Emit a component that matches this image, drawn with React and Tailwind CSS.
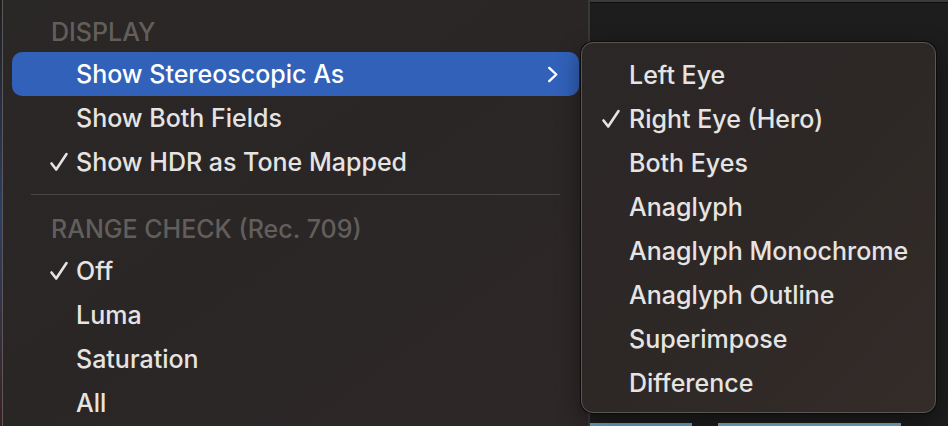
import { Fragment } from "react"

const FONT = "font-['Inter','Liberation_Sans',sans-serif]"

function Check({ className = "" }) {
  return (
    <svg viewBox="0 0 20 20" className={"w-[20px] h-[20px] " + className} fill="none">
      <path d="M2.5 11.5 L7.2 17.5 L17.5 2" stroke="currentColor" strokeWidth="2.6" strokeLinecap="round" strokeLinejoin="round" />
    </svg>
  )
}

function Chevron() {
  return (
    <svg viewBox="0 0 12 18" className="w-[12px] h-[17px]" fill="none">
      <path d="M2 2 L9.5 9 L2 16" stroke="currentColor" strokeWidth="2.5" strokeLinecap="round" strokeLinejoin="round" />
    </svg>
  )
}

function Header({ children }) {
  return (
    <div className="h-[44px] flex items-center pt-[5px] pl-[48px] text-[25px] font-medium text-[#625e5c]">
      {children}
    </div>
  )
}

function Item({ label, checked, active, submenu }) {
  return (
    <div
      className={
        "mx-[9px] h-[44px] flex items-center pl-[37px] pr-[20px] rounded-[10px] text-[25px] font-medium " +
        (active ? "bg-[#3161b9] text-white" : "text-[#e6e4e3]")
      }
    >
      <span className="w-[27px] flex items-center">{checked && <Check />}</span>
      <span className="flex-1 leading-none">{label}</span>
      {submenu && <Chevron />}
    </div>
  )
}

const stereo = [
  { label: "Left Eye" },
  { label: "Right Eye (Hero)", checked: true },
  { label: "Both Eyes" },
  { label: "Anaglyph" },
  { label: "Anaglyph Monochrome" },
  { label: "Anaglyph Outline" },
  { label: "Superimpose" },
  { label: "Difference" },
]

export default function App() {
  return (
    <div className={"relative w-[948px] h-[426px] overflow-hidden flex bg-[#1d1d1d] " + FONT}>
      {/* sliver of the app behind, left edge */}
      <div className="w-[2px] bg-linear-to-b from-[#1f1f1f] via-[#2b3f66] to-[#3a2020]" />

      {/* main menu */}
      <div className="w-[586px] border-l border-[#5c5858] bg-linear-to-br from-[#2a2727] via-[#2a2626] to-[#2e2728] flex flex-col">
        <div className="h-[8px]" />
        <Header>DISPLAY</Header>
        <Item label="Show Stereoscopic As" active submenu />
        <Item label="Show Both Fields" />
        <Item label="Show HDR as Tone Mapped" checked />
        <div className="py-[10px] px-[28px]">
          <div className="h-px bg-[#4a4645]" />
        </div>
        <Header>RANGE CHECK (Rec. 709)</Header>
        <Item label="Off" checked />
        <Item label="Luma" />
        <Item label="Saturation" />
        <Item label="All" />
      </div>

      {/* viewer area behind the submenu */}
      <div className="flex-1 flex flex-col border-l-2 border-[#383838]">
        <div className="h-[2px] bg-[#3a3a3a]" />
        <div className="h-px bg-[#0e0e0e]" />
        <div className="flex-1" />
        <div className="h-[3px] flex">
          <div className="w-[102px] bg-[#6e9fbe]" />
          <div className="w-[26px]" />
          <div className="w-[183px] bg-[#79aac6]" />
        </div>
      </div>

      {/* submenu */}
      <div className="absolute left-[581px] top-[42px] w-[355px] h-[371px] rounded-[12px] border border-[#5a5654] ring-1 ring-[#0c0c0c] bg-linear-to-br from-[#2b2726] via-[#2d2826] to-[#342c29] shadow-[0_8px_24px_rgba(0,0,0,0.45)] pt-[10px]">
        {stereo.map((s) => (
          <div key={s.label} className="mx-[9px] h-[44px] flex items-center pl-[10px] text-[25px] font-medium text-[#e6e4e3]">
            <span className="w-[28px] flex items-center">{s.checked && <Check />}</span>
            <span className="leading-none">{s.label}</span>
          </div>
        ))}
      </div>
    </div>
  )
}
